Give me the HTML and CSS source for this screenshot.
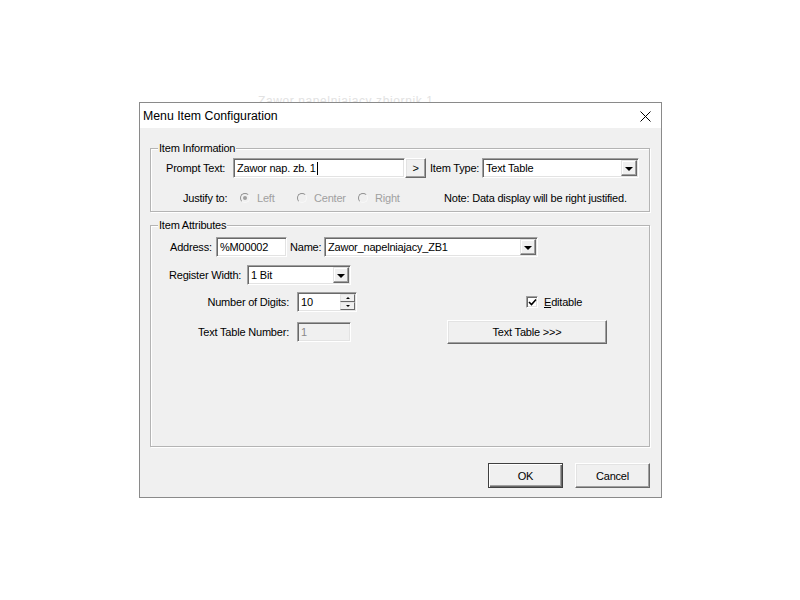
FILE: index.html
```html
<!DOCTYPE html>
<html>
<head>
<meta charset="utf-8">
<link rel="stylesheet" href="styles.css">
</head>
<body>
<div class="stage">
  <div class="bg-text">Zawor napelniajacy zbiornik 1</div>
  <div class="dialog">
    <div class="titlebar">
      <span class="title">Menu Item Configuration</span>
      <span class="close"><svg width="11" height="11" viewBox="0 0 11 11"><path d="M0.5 0.5 L10.5 10.5 M10.5 0.5 L0.5 10.5" stroke="#000" stroke-width="1" fill="none"/></svg></span>
    </div>
    <div class="body">
      <div class="group g1">
        <span class="legend">Item Information</span>
        <div class="row r1">
          <span class="lbl prompt-lbl">Prompt Text:</span>
          <div class="edit prompt-edit">Zawor nap. zb. 1<span class="caret"></span></div>
          <div class="btn small-btn">&gt;</div>
          <span class="lbl type-lbl">Item Type:</span>
          <div class="edit combo type-combo"><span class="val">Text Table</span><span class="drop"><i></i></span></div>
        </div>
        <div class="row r2">
          <span class="lbl justify-lbl">Justify to:</span>
          <span class="opt opt-left"><span class="radio checked"></span><span class="opt-txt">Left</span></span>
          <span class="opt opt-center"><span class="radio"></span><span class="opt-txt">Center</span></span>
          <span class="opt opt-right"><span class="radio"></span><span class="opt-txt">Right</span></span>
          <span class="note">Note: Data display will be right justified.</span>
        </div>
      </div>
      <div class="group g2">
        <span class="legend">Item Attributes</span>
        <div class="row ra">
          <span class="lbl addr-lbl">Address:</span>
          <div class="edit addr-edit">%M00002</div>
          <span class="lbl name-lbl">Name:</span>
          <div class="edit combo name-combo"><span class="val">Zawor_napelniajacy_ZB1</span><span class="drop"><i></i></span></div>
        </div>
        <div class="row rb">
          <span class="lbl reg-lbl">Register Width:</span>
          <div class="edit combo reg-combo"><span class="val">1 Bit</span><span class="drop"><i></i></span></div>
        </div>
        <div class="row rc">
          <span class="lbl col-lbl">Number of Digits:</span>
          <div class="edit spin"><span class="val">10</span><span class="spin-btns"><span class="sb up"><i></i></span><span class="sb down"><i></i></span></span></div>
          <span class="check"><svg width="9" height="9" viewBox="0 0 9 9"><path d="M1 4 L3.5 6.5 L8 1.5" stroke="#000" stroke-width="1.6" fill="none"/></svg></span>
          <span class="check-lbl"><u>E</u>ditable</span>
        </div>
        <div class="row rd">
          <span class="lbl col-lbl">Text Table Number:</span>
          <div class="edit disabled ttn-edit">1</div>
          <div class="btn tt-btn">Text Table &gt;&gt;&gt;</div>
        </div>
      </div>
      <div class="footer">
        <div class="btn dlg-btn default">OK</div>
        <div class="btn dlg-btn">Cancel</div>
      </div>
    </div>
  </div>
</div>
</body>
</html>
```

FILE: styles.css
```css
* { box-sizing: border-box; }
body {
  margin: 0;
  background: #fff;
  font-family: "Liberation Sans", Arial, sans-serif;
  font-size: 11px;
  letter-spacing: -0.2px;
  color: #000;
}
.stage { position: relative; width: 800px; height: 600px; }
.bg-text {
  position: absolute;
  left: 258px;
  top: 94px;
  font-size: 12px;
  color: #e2e2e2;
  letter-spacing: 0.6px;
}
.dialog {
  position: absolute;
  left: 139px;
  top: 102px;
  width: 523px;
  height: 396px;
  border: 1px solid #8a8a8a;
  background: #f0f0f0;
  display: flex;
  flex-direction: column;
}
.titlebar {
  height: 25px;
  flex: none;
  background: #fff;
  display: flex;
  align-items: center;
  justify-content: space-between;
  padding-left: 3px;
}
.title { font-size: 12.3px; letter-spacing: 0; color: #000; }
.close { display: flex; margin-right: 10px; margin-top: 1px; }
.body {
  flex: 1;
  padding: 20px 11px 9px 10px;
  display: flex;
  flex-direction: column;
}
.group {
  position: relative;
  border: 1px solid #b4b4b4;
  box-shadow: inset 1px 1px 0 #fff, 1px 1px 0 #fff;
}
.legend {
  position: absolute;
  top: -8px;
  left: 7px;
  padding: 0 1px;
  background: #f0f0f0;
  line-height: 14px;
}
.g1 { height: 64px; padding: 9px 0 0 15px; }
.g2 { height: 222px; margin-top: 13px; padding-top: 11px; }
.row { display: flex; align-items: center; }
.r1 { height: 20px; }
.lbl { white-space: nowrap; }
.prompt-lbl { width: 67px; }
.edit {
  height: 20px;
  background: #fff;
  border: 1px solid;
  border-color: #a0a0a0 #fff #fff #a0a0a0;
  box-shadow: inset 1px 1px 0 #696969, inset -1px -1px 0 #e3e3e3;
  padding: 0 3px;
  display: flex;
  align-items: center;
  white-space: nowrap;
  position: relative;
}
.prompt-edit { width: 172px; }
.caret { display: inline-block; width: 1px; height: 13px; background: #000; margin-left: 1px; }
.btn {
  background: #f0f0f0;
  border: 1px solid;
  border-color: #fff #696969 #696969 #fff;
  box-shadow: inset -1px -1px 0 #a0a0a0, inset 1px 1px 0 #e3e3e3;
  display: flex;
  align-items: center;
  justify-content: center;
  white-space: nowrap;
}
.small-btn { width: 21px; height: 20px; }
.type-lbl { margin-left: 4px; width: 52px; }
.type-combo { width: 157px; }
.combo .val { flex: 1; }
.drop {
  width: 16px;
  height: 16px;
  margin-right: -2px;
  background: #f0f0f0;
  border: 1px solid;
  border-color: #e3e3e3 #696969 #696969 #e3e3e3;
  box-shadow: inset -1px -1px 0 #a0a0a0, inset 1px 1px 0 #fff;
  display: flex;
  align-items: center;
  justify-content: center;
}
.drop i {
  display: block;
  width: 0;
  height: 0;
  border-left: 4px solid transparent;
  border-right: 4px solid transparent;
  border-top: 4px solid #000;
  margin-top: 1px;
}
.r2 { height: 14px; margin-top: 13px; }
.justify-lbl { margin-left: 17px; width: 57px; }
.opt { display: flex; align-items: center; color: #a0a0a0; }
.opt-left { width: 57px; }
.opt-center { width: 61px; }
.opt-right { width: 86px; }
.opt-txt { margin-left: 7px; }
.radio {
  width: 10px;
  height: 10px;
  border-radius: 50%;
  border: 1px solid;
  border-color: #909090 #f8f8f8 #f8f8f8 #909090;
  display: flex;
  align-items: center;
  justify-content: center;
}
.radio.checked::after {
  content: "";
  width: 4px;
  height: 4px;
  border-radius: 50%;
  background: #a0a0a0;
}
.note { white-space: nowrap; }
.ra { height: 20px; }
.addr-lbl { margin-left: 19px; width: 46px; }
.addr-edit { width: 71px; }
.name-lbl { margin-left: 3px; width: 34px; }
.name-combo { width: 214px; }
.rb { height: 20px; margin-top: 8px; }
.reg-lbl { margin-left: 18px; width: 78px; }
.reg-combo { width: 104px; }
.rc { height: 20px; margin-top: 7px; }
.col-lbl { width: 146px; text-align: right; padding-right: 8px; }
.spin { width: 60px; }
.spin .val { flex: 1; }
.spin-btns {
  display: flex;
  flex-direction: column;
  width: 15px;
  height: 16px;
  margin-right: -2px;
}
.sb {
  flex: 1;
  background: #f0f0f0;
  border: 1px solid;
  border-color: #e3e3e3 #696969 #696969 #e3e3e3;
  display: flex;
  align-items: center;
  justify-content: center;
}
.sb i { display: block; width: 0; height: 0; border-left: 2px solid transparent; border-right: 2px solid transparent; }
.sb.up i { border-bottom: 2px solid #000; }
.sb.down i { border-top: 2px solid #000; }
.check {
  margin-left: 169px;
  width: 12px;
  height: 12px;
  background: #fff;
  border: 1px solid;
  border-color: #a0a0a0 #fff #fff #a0a0a0;
  box-shadow: inset 1px 1px 0 #696969, inset -1px -1px 0 #e3e3e3;
  display: flex;
  align-items: center;
  justify-content: center;
}
.check-lbl { margin-left: 6px; }
.rd { height: 24px; margin-top: 8px; }
.disabled { background: #f0f0f0; color: #8a8a8a; }
.ttn-edit { width: 54px; }
.tt-btn { margin-left: 96px; width: 160px; height: 24px; }
.footer {
  margin-top: 16px;
  display: flex;
  justify-content: flex-end;
  gap: 12px;
}
.dlg-btn { width: 75px; height: 25px; }
.dlg-btn.default {
  border-color: #404040;
  box-shadow: inset 1px 1px 0 #fff, inset -1px -1px 0 #696969, inset -2px -2px 0 #a0a0a0;
}
```
